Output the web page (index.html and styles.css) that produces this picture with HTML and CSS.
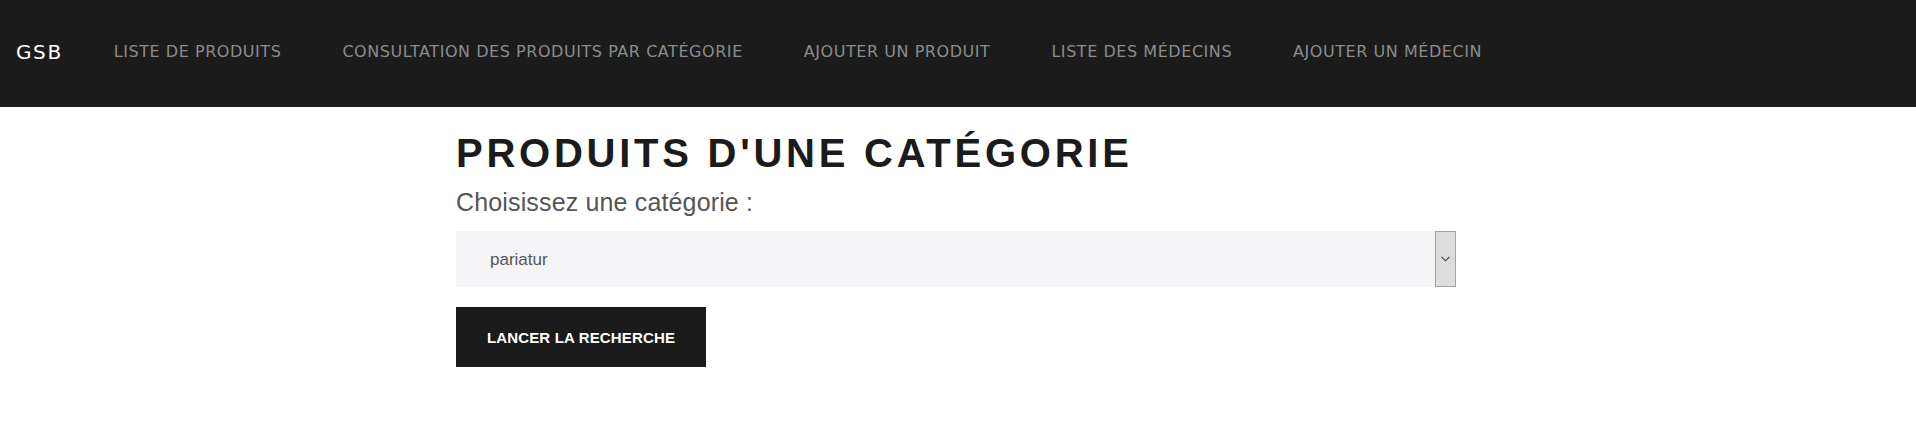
FILE: index.html
```html
<!DOCTYPE html>
<html lang="fr">
<head>
<meta charset="utf-8">
<title>GSB - Produits d'une catégorie</title>
<link rel="stylesheet" href="styles.css">
</head>
<body>
<nav class="navbar">
  <a class="brand" href="#">GSB</a>
  <ul class="nav-links">
    <li><a href="#">Liste de produits</a></li>
    <li><a href="#">Consultation des produits par catégorie</a></li>
    <li><a href="#">Ajouter un produit</a></li>
    <li><a href="#">Liste des médecins</a></li>
    <li><a href="#">Ajouter un médecin</a></li>
  </ul>
</nav>
<main class="content">
  <h1 class="title">Produits d'une catégorie</h1>
  <form class="search-form">
    <label class="label" for="cat">Choisissez une catégorie :</label>
    <div class="select-wrap">
      <select id="cat" class="select">
        <option>pariatur</option>
      </select>
      <span class="select-arrow">
        <svg width="9" height="6" viewBox="0 0 9 6"><path d="M0.5 0.8 L4.5 4.8 L8.5 0.8" fill="none" stroke="#444" stroke-width="1.1"/></svg>
      </span>
    </div>
    <button type="button" class="btn">Lancer la recherche</button>
  </form>
</main>
</body>
</html>
```
FILE: styles.css
```css
* { box-sizing: border-box; }
body {
  margin: 0;
  background: #fff;
  font-family: "Liberation Sans", Arial, sans-serif;
}
.navbar {
  height: 107px;
  background: #1b1b1b;
  display: flex;
  align-items: center;
  padding: 0 0 4px 16px;
}
.brand {
  font-family: "DejaVu Sans", sans-serif;
  font-size: 20px;
  letter-spacing: 1.6px;
  color: #fff;
  text-decoration: none;
  margin-right: 51px;
}
.nav-links {
  list-style: none;
  margin: 0;
  padding: 0;
  display: flex;
  gap: 61px;
}
.nav-links a {
  font-family: "DejaVu Sans", sans-serif;
  font-size: 16px;
  letter-spacing: 0.55px;
  text-transform: uppercase;
  color: #8c8c8c;
  text-decoration: none;
}
.content {
  margin-left: 456px;
  width: 1000px;
  padding-top: 22px;
}
.title {
  margin: 0;
  font-size: 40px;
  line-height: 48px;
  font-weight: bold;
  letter-spacing: 3.75px;
  text-transform: uppercase;
  color: #1b1b1b;
}
.search-form {
  display: flex;
  flex-direction: column;
  align-items: flex-start;
}
.label {
  margin-top: 10px;
  font-size: 25px;
  line-height: 30px;
  letter-spacing: 0.15px;
  color: #555;
}
.select-wrap {
  margin-top: 14px;
  width: 1000px;
  height: 56px;
  display: flex;
  background: #f5f5f7;
}
.select {
  flex: 1;
  appearance: none;
  -webkit-appearance: none;
  border: none;
  background: transparent;
  padding: 0 0 0 34px;
  font-family: "Liberation Sans", Arial, sans-serif;
  font-size: 17px;
  color: #555;
  outline: none;
}
.select-arrow {
  width: 21px;
  background: #dddddd;
  border: 1px solid #a3a3a3;
  display: flex;
  align-items: center;
  justify-content: center;
}
.btn {
  margin-top: 20px;
  width: 250px;
  height: 60px;
  border: none;
  background: #1b1b1b;
  color: #fff;
  font-family: "Liberation Sans", Arial, sans-serif;
  font-weight: bold;
  font-size: 15px;
  letter-spacing: 0.15px;
  text-transform: uppercase;
  padding: 0;
}
```
